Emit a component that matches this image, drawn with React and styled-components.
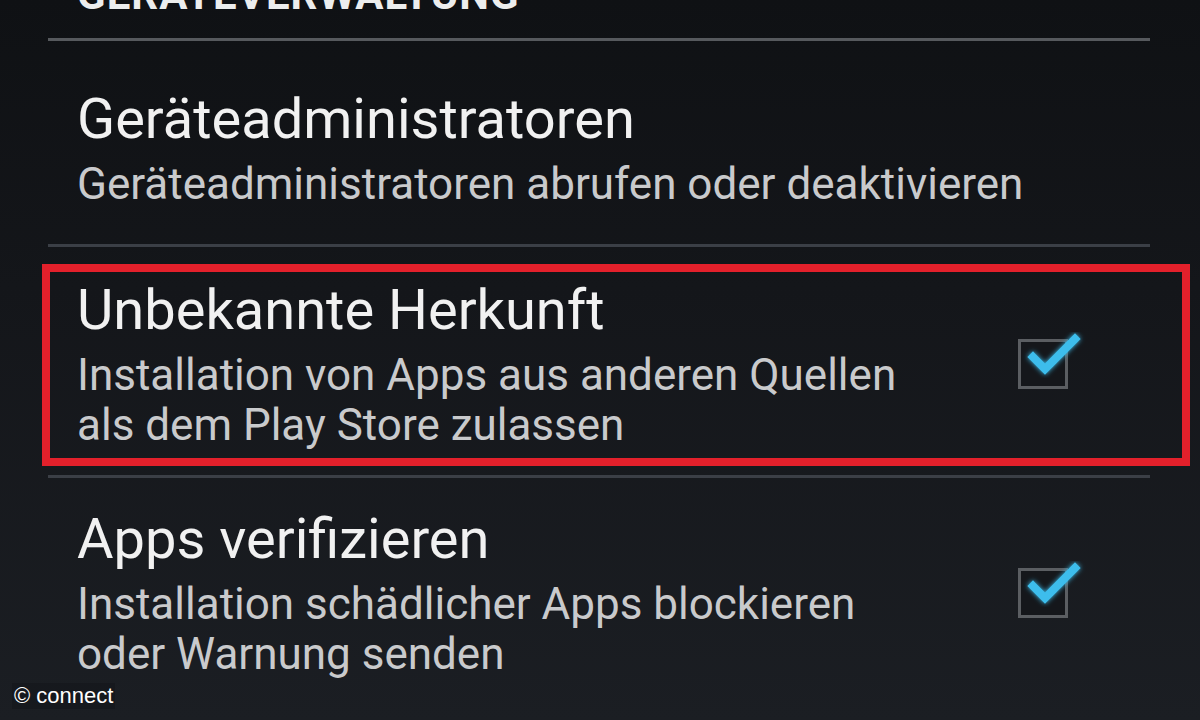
import React from 'react'
import styled, { createGlobalStyle } from 'styled-components'

const GlobalStyle = createGlobalStyle`
    html, body {
        margin: 0;
        padding: 0;
        background: #121418;
    }
    body {
        font-family: Roboto, "Noto Sans", sans-serif;
    }
`

const items = [
    {
        title: 'Geräteadministratoren',
        lines: ['Geräteadministratoren abrufen oder deaktivieren'],
        checkbox: false,
    },
    {
        title: 'Unbekannte Herkunft',
        lines: ['Installation von Apps aus anderen Quellen', 'als dem Play Store zulassen'],
        checkbox: true,
        highlighted: true,
    },
    {
        title: 'Apps verifizieren',
        lines: ['Installation schädlicher Apps blockieren', 'oder Warnung senden'],
        checkbox: true,
    },
]

function CheckBox() {
    return (
        <CheckBoxStyled>
            <svg width="70" height="60" viewBox="0 0 70 60">
                <defs>
                    <filter id="glow" x="-30%" y="-30%" width="160%" height="160%">
                        <feGaussianBlur stdDeviation="2.5" result="b" />
                        <feMerge>
                            <feMergeNode in="b" />
                            <feMergeNode in="SourceGraphic" />
                        </feMerge>
                    </filter>
                </defs>
                <polyline
                    points="15,25 27,37 57,7"
                    fill="none"
                    stroke="#3cbdec"
                    strokeWidth="8"
                    strokeLinecap="square"
                    filter="url(#glow)"
                />
            </svg>
        </CheckBoxStyled>
    )
}

function App() {
    return (
        <>
            <GlobalStyle />
            <Screen>
                <Header>GERÄTEVERWALTUNG</Header>
                <Divider $bright />
                {items.map((item, i) => (
                    <React.Fragment key={item.title}>
                        <Row $highlighted={item.highlighted} $first={i === 0} $last={i === items.length - 1}>
                            <div className="text">
                                <Title>{item.title}</Title>
                                {item.lines.map((line) => (
                                    <Summary key={line}>{line}</Summary>
                                ))}
                            </div>
                            {item.checkbox && <CheckBox />}
                        </Row>
                        {i < items.length - 1 && <Divider $gapTop={item.highlighted ? 9 : 0} $gapBottom={items[i + 1].highlighted ? 17 : 0} />}
                    </React.Fragment>
                ))}
                <Watermark>© connect</Watermark>
            </Screen>
        </>
    )
}

const Screen = styled.div`
    position: relative;
    width: 1200px;
    height: 720px;
    overflow: hidden;
    background: linear-gradient(180deg, #0f1114 0%, #14161a 40%, #1b1e23 100%);
    padding: 0 50px 0 48px;
    box-sizing: border-box;
    display: flex;
    flex-direction: column;
`

const Header = styled.div`
    height: 38px;
    box-sizing: border-box;
    padding: 0 0 22px 29px;
    display: flex;
    align-items: flex-end;
    font-size: 42px;
    line-height: 1;
    font-weight: 700;
    color: #eceded;
    letter-spacing: 1px;
    white-space: nowrap;
`

const Divider = styled.div`
    height: 3px;
    flex-shrink: 0;
    margin-top: ${(p) => p.$gapTop || 0}px;
    margin-bottom: ${(p) => p.$gapBottom || 0}px;
    background: ${(p) => (p.$bright ? '#56595d' : '#3b3f46')};
`

const Row = styled.div`
    display: flex;
    align-items: center;
    flex-shrink: 0;
    box-sizing: border-box;
    padding: ${(p) => (p.$first ? '46px 82px 35px 29px' : p.$last ? '29px 82px 0 29px' : '6px 114px 8px 27px')};
    ${(p) =>
        p.$highlighted &&
        `
        margin: 0 -40px 0 -6px;
        border: 8px solid #e3202b;
    `}
    .text {
        flex: 1;
        display: flex;
        flex-direction: column;
    }
`

const Title = styled.div`
    font-size: 56px;
    line-height: 64px;
    color: #f1f1f1;
    margin-bottom: 8px;
    white-space: nowrap;
`

const Summary = styled.div`
    font-size: 44px;
    line-height: 50px;
    color: #c9cacc;
    white-space: nowrap;
`

const CheckBoxStyled = styled.div`
    position: relative;
    width: 50px;
    height: 50px;
    box-sizing: border-box;
    border: 3px solid #5b5e62;
    background: #15171b;
    flex-shrink: 0;
    svg {
        position: absolute;
        left: -3px;
        top: -10px;
    }
`

const Watermark = styled.div`
    position: absolute;
    left: 12px;
    bottom: 11px;
    font-family: "Liberation Sans", Arial, sans-serif;
    font-size: 22px;
    color: #ffffff;
    background: rgba(20, 22, 26, 0.6);
    padding: 0 2px;
`

export default App
